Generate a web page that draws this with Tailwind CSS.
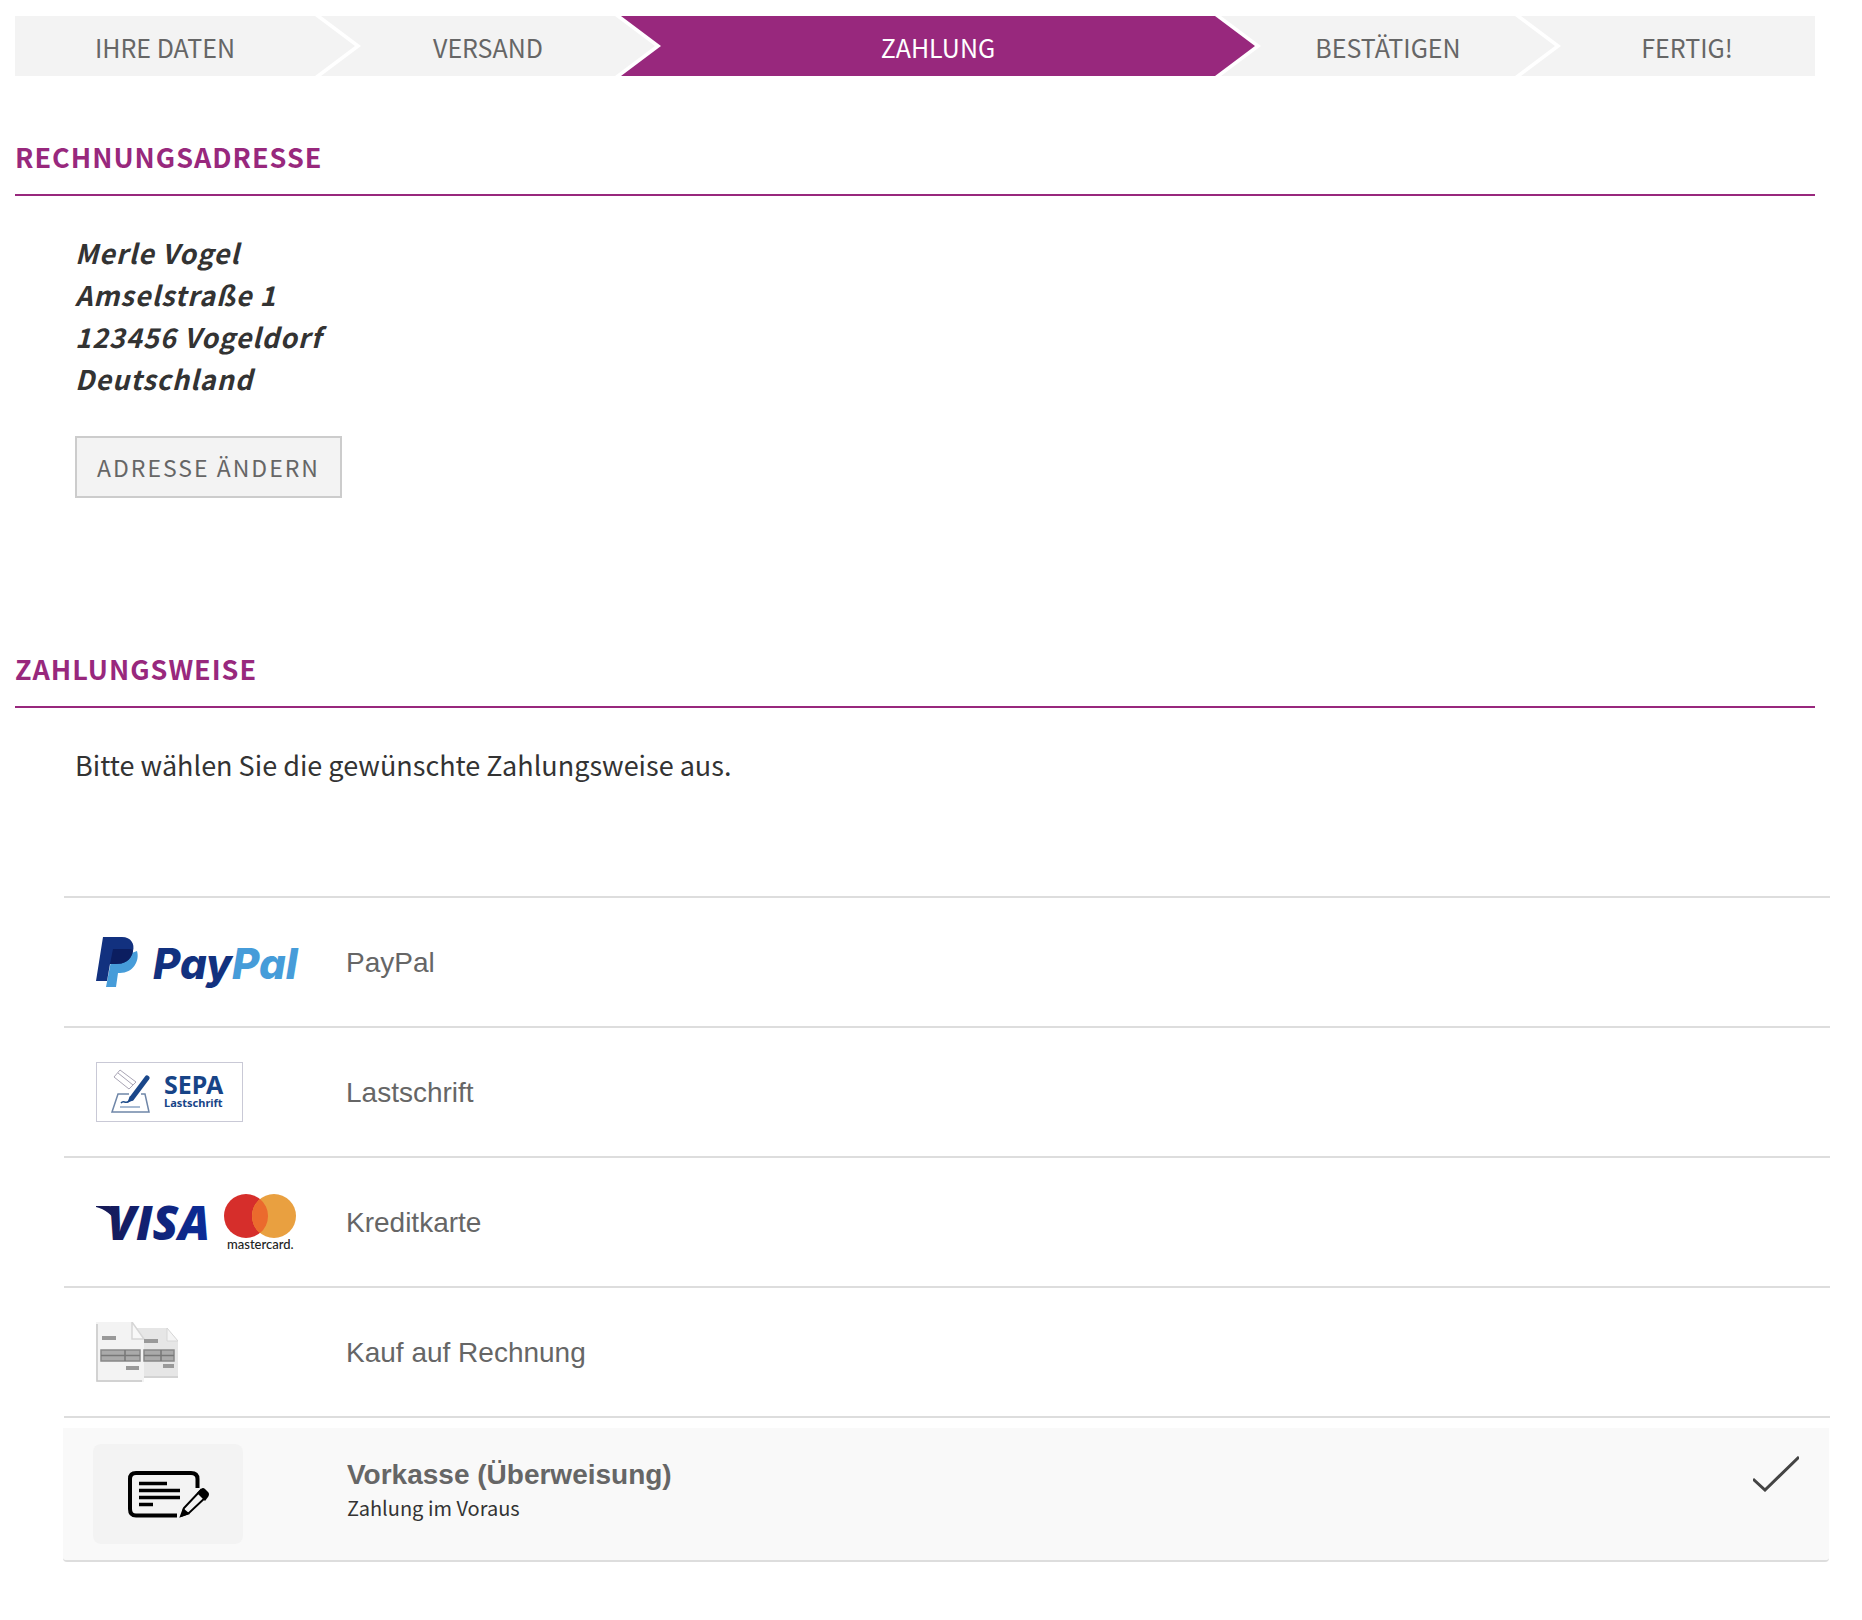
<!DOCTYPE html>
<html lang="de">
<head>
  <meta charset="UTF-8" />
  <meta name="viewport" content="width=device-width, initial-scale=1.0"/>
  <title>Zahlung</title>
  <script src="https://cdn.jsdelivr.net/npm/@tailwindcss/browser@4"></script>
</head>
<body class="bg-white text-[#333] text-[27px] font-['Noto_Sans_CJK_SC','Noto_Sans',sans-serif]">

  <main class="pt-4 pb-14 pl-[15px] pr-8">

    <!-- Checkout steps -->
    <nav class="mr-[15px]">
      <ol class="grid grid-cols-6 h-[60px] text-[25px] leading-[58px] text-center uppercase text-[#666]">
        <li class="-mr-10 pr-10 pt-[2px] bg-[#f3f3f3] [clip-path:polygon(0_0,calc(100%-40px)_0,100%_50%,calc(100%-40px)_100%,0_100%)]">Ihre Daten</li>
        <li class="-mr-10 pl-[6px] pt-[2px] bg-[#f3f3f3] [clip-path:polygon(6px_0,calc(100%-40px)_0,100%_50%,calc(100%-40px)_100%,6px_100%,46px_50%)]">Versand</li>
        <li class="col-span-2 -mr-10 pl-[6px] pt-[2px] bg-[#98287d] text-white [clip-path:polygon(6px_0,calc(100%-40px)_0,100%_50%,calc(100%-40px)_100%,6px_100%,46px_50%)]" aria-current="step">Zahlung</li>
        <li class="-mr-10 pl-[6px] pt-[2px] bg-[#f3f3f3] [clip-path:polygon(6px_0,calc(100%-40px)_0,100%_50%,calc(100%-40px)_100%,6px_100%,46px_50%)]">Bestätigen</li>
        <li class="pl-11 pt-[2px] bg-[#f3f3f3] [clip-path:polygon(6px_0,100%_0,100%_100%,6px_100%,46px_50%)]">Fertig!</li>
      </ol>
    </nav>

    <!-- Billing address -->
    <section class="mt-16">
      <h2 class="mr-[15px] h-14 border-b-2 border-[#98287d] leading-[34px] font-bold tracking-[1px] uppercase text-[#98287d]">Rechnungsadresse</h2>
      <div class="pl-[60px] pt-9">
        <address class="italic font-bold leading-[42px] tracking-[1px]">
          Merle Vogel<br>
          Amselstraße 1<br>
          123456 Vogeldorf<br>
          Deutschland
        </address>
        <button type="button" class="mt-9 h-[62px] px-5 bg-[#f3f3f3] border-2 border-[#ccc] text-[23px] tracking-[2px] uppercase text-[#666]">Adresse ändern</button>
      </div>
    </section>

    <!-- Payment method -->
    <section class="mt-[154px]">
      <h2 class="mr-[15px] h-14 border-b-2 border-[#98287d] leading-[34px] font-bold tracking-[1px] uppercase text-[#98287d]">Zahlungsweise</h2>
      <p class="pl-[60px] pt-9 leading-[42px]">Bitte wählen Sie die gewünschte Zahlungsweise aus.</p>

      <form class="mt-[110px] ml-[49px] border-t-2 border-[#ddd] text-[28px] text-[#666] font-['Liberation_Sans',Arial,sans-serif]">

        <label class="flex items-center h-[130px] pl-8 border-b-2 border-[#ddd]">
          <input type="radio" name="payment" value="paypal" class="sr-only">
          <span class="w-[250px]">
            <svg class="overflow-visible" width="200" height="50" viewBox="0 0 200 50" aria-hidden="true">
              <path d="M41 14C44 24 37 36 24 36H22L20 50H10L15 24Z" fill="#469cd9"/>
              <path d="M7 0H26C35 0 39 7 37 14C35 24 28 27 19 27H14L11 44H0Z" fill="#12317f"/>
              <path d="M17 12H33C36 12 37 13 37 14C35 24 28 27 19 27H14Z" fill="#0b1e60"/>
              <text x="57" y="42" font-family="Inter" font-weight="800" font-style="italic" font-size="42" fill="#12317f">Pay<tspan fill="#469cd9">Pal</tspan></text>
            </svg>
          </span>
          <span class="pt-[2px]">PayPal</span>
        </label>

        <label class="flex items-center h-[130px] pl-8 border-b-2 border-[#ddd]">
          <input type="radio" name="payment" value="sepa" class="sr-only">
          <span class="w-[250px]">
            <svg width="147" height="60" viewBox="0 0 147 60" aria-hidden="true">
              <rect x="0.500" y="0.500" width="146" height="59" fill="#fff" stroke="#c9c9d6"/>
              <path d="M24 8L40 20L33 27L18 15Z" fill="#fff" stroke="#a9a5b5"/>
              <path d="M22 11L37 23" stroke="#a9a5b5" stroke-width="1"/>
              <path d="M33 32H22L16 50H53L49 32H45" fill="none" stroke="#6f86a8" stroke-width="1.500"/>
              <path d="M24 45H44" stroke="#8ba4c4" stroke-width="1.500"/>
              <path d="M25 41C28 37 29 43 33 39" fill="none" stroke="#1f4e8c" stroke-width="1.500"/>
              <path d="M51 16L36 36" stroke="#1a478a" stroke-width="5" stroke-linecap="round"/>
              <path d="M34 34L31 41L38 38Z" fill="#1a478a"/>
              <text x="68" y="32" font-family="Noto Sans" font-weight="700" font-size="25" fill="#174487">SEPA</text>
              <text x="68" y="45" font-family="Noto Sans" font-weight="700" font-size="11" fill="#174487">Lastschrift</text>
            </svg>
          </span>
          <span class="pt-[2px]">Lastschrift</span>
        </label>

        <label class="flex items-center h-[130px] pl-8 border-b-2 border-[#ddd]">
          <input type="radio" name="payment" value="card" class="sr-only">
          <span class="w-[250px]">
            <svg class="overflow-visible" width="200" height="56" viewBox="0 0 200 56" aria-hidden="true">
              <defs>
                <linearGradient id="visa" gradientUnits="userSpaceOnUse" x1="10" y1="0" x2="110" y2="0">
                  <stop offset="0" stop-color="#161a58"/>
                  <stop offset="1" stop-color="#0b2c98"/>
                </linearGradient>
              </defs>
              <path d="M0 12H13C16 12 17 13 18 16L21 30C17 21 9 15 0 13Z" fill="url(#visa)"/>
              <text x="11" y="46" font-family="Open Sans" font-weight="800" font-style="italic" font-size="47" fill="url(#visa)">VISA</text>
              <circle cx="150" cy="22" r="22" fill="#d62e2b"/>
              <circle cx="178" cy="22" r="22" fill="#e9a040"/>
              <path d="M164 5A22 22 0 0 1 164 39A22 22 0 0 1 164 5Z" fill="#eb6a2d"/>
              <text x="131" y="55" font-family="Lato" font-weight="500" font-size="13" fill="#222">mastercard.</text>
            </svg>
          </span>
          <span class="pt-[2px]">Kreditkarte</span>
        </label>

        <label class="flex items-center h-[130px] pl-8 border-b-2 border-[#ddd]">
          <input type="radio" name="payment" value="invoice" class="sr-only">
          <span class="w-[250px]">
            <svg width="82" height="60" viewBox="0 0 82 60" aria-hidden="true">
              <path d="M40 6H71L82 19V56H40Z" fill="#e6e6e6"/>
              <path d="M71 6L82 19H71Z" fill="#f4f4f4" stroke="#d6d6d6"/>
              <path d="M47 55H82" stroke="#ccc" stroke-width="1.500"/>
              <path d="M0 0H36L48 17V60H0Z" fill="#f3f3f3"/>
              <path d="M36 0L48 17H36Z" fill="#f8f8f8" stroke="#d6d6d6" stroke-width="1.500"/>
              <path d="M1 2V59H46" fill="none" stroke="#c8c8c8" stroke-width="1.500"/>
              <path d="M6 16H20M30 46H43M48 19H62M67 44H78" stroke="#999" stroke-width="4"/>
              <path d="M5 28H44V39H5ZM48 28H78V39H48Z" fill="#aaa" stroke="#888" stroke-width="1.500"/>
              <path d="M5 33.500H44M29 28V39M48 33.500H78M65 28V39" stroke="#777" stroke-width="1.500"/>
            </svg>
          </span>
          <span class="pt-[2px]">Kauf auf Rechnung</span>
        </label>

        <label class="flex items-start h-[134px] mt-[10px] -ml-px mr-px pl-[30px] pt-4 pr-[30px] bg-[#f9f9f9] border-b-2 border-[#ddd] rounded-b">
          <input type="radio" name="payment" value="prepay" class="sr-only" checked>
          <span class="w-[254px]">
            <span class="block w-[150px] h-[100px] rounded-lg bg-[#f3f3f3]">
              <svg width="150" height="100" viewBox="0 0 150 100" aria-hidden="true">
                <path d="M104.500 44V35Q104.500 29 98 29H43Q37 29 37 35V65Q37 71.500 43 71.500H84" fill="none" stroke="#000" stroke-width="4"/>
                <path d="M46 39.500H74M46 46.500H87M46 53.500H87M46 60.500H60" stroke="#000" stroke-width="3.500"/>
                <path d="M108 46L114 52L96 69L88 72L91 64Z" fill="#f3f3f3" stroke="#000" stroke-width="2"/>
                <path d="M104 49L108 45Q110 43 112 45L115 48Q117 50 115 53L112 57Z" fill="#000"/>
                <path d="M88 73L90 64L97 70Z" fill="#000"/>
              </svg>
            </span>
          </span>
          <span class="flex-1 pt-[10px]">
            <span class="block leading-[42px] font-bold">Vorkasse (Überweisung)</span>
            <span class="block text-xl leading-6 text-[#333] font-['Noto_Sans_CJK_SC','Noto_Sans',sans-serif]">Zahlung im Voraus</span>
          </span>
          <svg class="mt-3" width="46" height="36" viewBox="0 0 46 36" aria-hidden="true">
            <path d="M0 23L12 34L46 1" fill="none" stroke="#444" stroke-width="3"/>
          </svg>
        </label>

      </form>
    </section>

  </main>
</body>
</html>
